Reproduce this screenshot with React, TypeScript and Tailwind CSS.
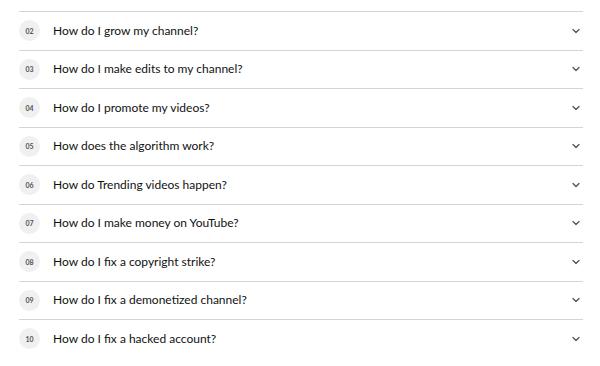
import { ChevronDown } from 'lucide-react';

const questions = [
  { num: '02', text: 'How do I grow my channel?' },
  { num: '03', text: 'How do I make edits to my channel?' },
  { num: '04', text: 'How do I promote my videos?' },
  { num: '05', text: 'How does the algorithm work?' },
  { num: '06', text: 'How do Trending videos happen?' },
  { num: '07', text: 'How do I make money on YouTube?' },
  { num: '08', text: 'How do I fix a copyright strike?' },
  { num: '09', text: 'How do I fix a demonetized channel?' },
  { num: '10', text: 'How do I fix a hacked account?' },
];

export default function App() {
  return (
    <div
      className="w-[600px] h-[366px] bg-white pt-[11px] pl-[19px] pr-[17px] overflow-hidden"
      style={{ fontFamily: 'Lato, Arial, sans-serif' }}
    >
      <ul>
        {questions.map((q) => (
          <li
            key={q.num}
            className="h-[38.5px] border-t border-[#d4d4d4] flex items-center"
          >
            <span className="w-[21px] h-[21px] rounded-full bg-[#f0f0f0] flex items-center justify-center text-[7px] font-bold text-[#555]">
              {q.num}
            </span>
            <span className="ml-[13px] flex-1 text-[12px] text-[#111]">
              {q.text}
            </span>
            <ChevronDown className="w-[12px] h-[12px] mr-[1px] text-[#555]" strokeWidth={2.6} />
          </li>
        ))}
      </ul>
    </div>
  );
}
